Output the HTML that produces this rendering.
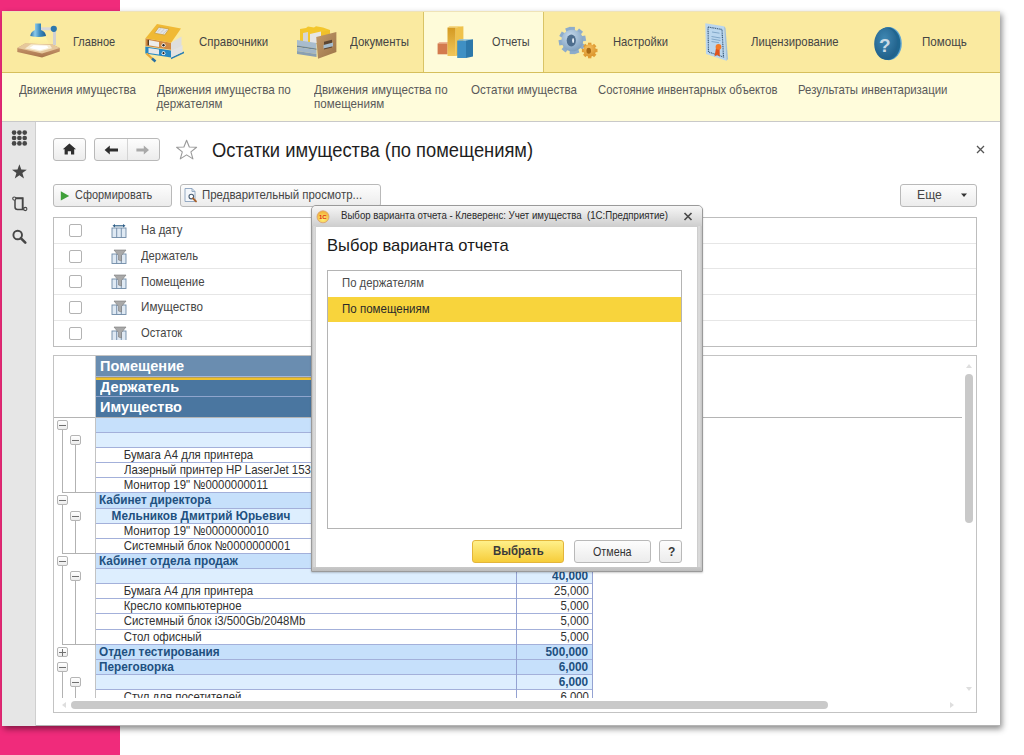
<!DOCTYPE html>
<html><head><meta charset="utf-8">
<style>
*{box-sizing:border-box;margin:0;padding:0}
html,body{width:1024px;height:755px;overflow:hidden;background:#fff;font-family:"Liberation Sans",sans-serif;position:relative}
.a{position:absolute}
.t{position:absolute;white-space:nowrap}
.btn{position:absolute;border:1px solid #b9b9b9;border-radius:3px;background:linear-gradient(#fdfdfd,#ececec)}
.cb{position:absolute;width:13px;height:13px;border:1px solid #b3b3b3;border-radius:2px;background:#fff;left:69px}
.tb{position:absolute;width:11px;height:10px;border:1px solid #b5b5b5;border-radius:2px;background:linear-gradient(#fff,#ececec)}
</style></head><body>
<div class="a" style="left:0px;top:0px;width:120px;height:755px;background:#f02b7b;"></div>
<div class="a" style="left:2px;top:11px;width:998px;height:715px;background:#fff;border-bottom:1px solid #b4b4b4;box-shadow:2px 3px 6px rgba(0,0,0,.45)"></div>
<div class="a" style="left:2px;top:11px;width:998px;height:62px;background:#faeaa0;border-top:1px solid #efe3b8;border-bottom:1px solid #d6bf5c"></div>
<div class="a" style="left:423px;top:12px;width:121px;height:60px;background:#fefbd9;border-left:1px solid #d9c466;border-right:1px solid #d9c466"></div>
<svg class="a" style="left:0;top:0" width="1024" height="72" viewBox="0 0 1024 72">
<defs>
<linearGradient id="gShade" x1="0" y1="0" x2="1" y2="0"><stop offset="0" stop-color="#2a6fa5"/><stop offset=".3" stop-color="#8ccbea"/><stop offset=".6" stop-color="#3d8cc0"/><stop offset="1" stop-color="#1f5f92"/></linearGradient>
<linearGradient id="gBoard" x1="0" y1="0" x2="0" y2="1"><stop offset="0" stop-color="#d2a278"/><stop offset="1" stop-color="#a8754c"/></linearGradient>
<radialGradient id="gPaper" cx="50%" cy="50%" r="50%"><stop offset="0" stop-color="#ffffff"/><stop offset=".6" stop-color="#fbf3dc"/><stop offset="1" stop-color="#e8caa0"/></radialGradient>
<linearGradient id="gCone" x1="0" y1="0" x2="0" y2="1"><stop offset="0" stop-color="#fff7a8"/><stop offset="1" stop-color="#fff3b0" stop-opacity=".2"/></linearGradient>
<linearGradient id="gYb" x1="0" y1="0" x2="0" y2="1"><stop offset="0" stop-color="#d49a22"/><stop offset="1" stop-color="#f0c65a"/></linearGradient>
<linearGradient id="gB" x1="0" y1="0" x2="1" y2="1"><stop offset="0" stop-color="#4f9ed0"/><stop offset="1" stop-color="#2a72a5"/></linearGradient>
<linearGradient id="gBrown" x1="0" y1="0" x2="1" y2="1"><stop offset="0" stop-color="#c29a6a"/><stop offset="1" stop-color="#9c7448"/></linearGradient>
<radialGradient id="gHelp" cx="45%" cy="35%" r="70%"><stop offset="0" stop-color="#3f88b3"/><stop offset="1" stop-color="#1d5c86"/></radialGradient>
<radialGradient id="gGear" cx="40%" cy="30%" r="75%"><stop offset="0" stop-color="#c6daec"/><stop offset="1" stop-color="#7b9cbc"/></radialGradient>
<radialGradient id="gGearO" cx="40%" cy="30%" r="75%"><stop offset="0" stop-color="#f6c160"/><stop offset="1" stop-color="#d9922a"/></radialGradient>
</defs>
<!-- lamp -->
<path d="M28.5 44 L31 36.5 L45.5 36.5 L49 44 Z" fill="url(#gCone)"/>
<path d="M17.3 48 L25 43.5 L52.5 44.5 L59.8 48 L59.8 51.5 L42 57.4 L17.3 52 Z" fill="url(#gBoard)"/>
<path d="M17.3 48 L25 43.5 L52.5 44.5 L59.8 48 L42 53.6 Z" fill="#e6c89c"/>
<path d="M25 48.5 L31 44.2 L50 45 L52 48.2 L40 51.5 Z" fill="#f7ecd2"/>
<path d="M29.5 48 L33.5 45.2 L47 45.8 L48.5 48 L40 50.3 Z" fill="#ffffff"/>
<rect x="53" y="29.5" width="3" height="15.5" fill="#d0d0d0"/>
<rect x="41" y="27.3" width="13" height="3" fill="#d8d8d8"/>
<circle cx="53.8" cy="28.8" r="3.1" fill="#2c78ad"/>
<path d="M35 23.5 L41 23.5 L41 30 Q45.6 31.5 46 36 Q38.2 38.2 30.3 36 Q30.8 31.5 35 30 Z" fill="url(#gShade)"/>
<!-- binders -->
<path d="M171 57.5 L184 51.5 L184 53.2 L171 59.2 Z" fill="#2a7fb6"/>
<path d="M171 50.5 L182.5 45 L182.5 52 L171 57.5 Z" fill="#e2e2e2"/>
<path d="M145.3 46.5 L171 50.5 L171 57.5 L145.3 53.5 Z" fill="#2688c2"/>
<path d="M148.5 48 L159 49.6 L159 54.6 L148.5 53 Z" fill="#e8e8e8"/>
<circle cx="163.5" cy="53.2" r="1.9" fill="#ffffff"/><circle cx="163.5" cy="53.2" r="1.1" fill="#222"/>
<path d="M171 42.8 L181.5 36.5 L181.5 46 L171 50.5 Z" fill="#dedede"/>
<path d="M145.5 38.2 L171 42.8 L171 49.8 L145.5 46.1 Z" fill="#d08a44"/>
<path d="M148.5 40 L159 41.9 L159 47 L148.5 45.3 Z" fill="#ececec"/>
<rect x="147.6" y="39.8" width="1.4" height="5.6" fill="#5a3a18"/>
<circle cx="163.5" cy="45.3" r="2" fill="#ffffff"/><circle cx="163.5" cy="45.3" r="1.2" fill="#222"/>
<path d="M145.5 38.2 L157 23.9 L181 28.6 L171.1 42.8 Z" fill="#f0b935"/>
<path d="M154.5 33.2 L158.8 27.2 L169 29 L164.7 35 Z" fill="#e4e4e4" stroke="#c89a30" stroke-width=".7"/>
<path d="M157.5 31.8 L161.5 28 M160.5 32.8 L164.5 29 M163 33.8 L167 30" stroke="#b8b8b8" stroke-width=".6"/>
<path d="M146.5 53.5 L152 58.5" stroke="#e8a93a" stroke-width="2.3"/>
<path d="M152 58.5 L155.5 61.5" stroke="#2a6fa0" stroke-width="2.5"/>
<!-- documents drawer -->
<path d="M300 44 L300 29 L306 28 L308 26.5 L314 27.5 L316 26.3 L323 27.5 L330 30 L330 44 Z" fill="#f3c62c"/>
<path d="M303 43 L303 33 L308 32 L308 43 Z" fill="#d6d6d6"/>
<path d="M310 43 L310 34 L321 31.5 L321 43 Z" fill="#e6e6e6"/>
<path d="M321 43 L321 32 L330 30 L330 43 Z" fill="#f0c02a"/>
<path d="M297 40 L316.5 43 L316.5 48.5 L297 45.5 Z" fill="#a8bccd"/>
<path d="M297 45.5 L316.5 48.5 L316.5 50 L297 47 Z" fill="#6e8496"/>
<path d="M297 47 L316.5 50 L316.5 54 L297 51 Z" fill="#a2b6c7"/>
<path d="M297 51 L316.5 54 L316.5 57 L297 54 Z" fill="#8aa0b2"/>
<path d="M316.2 36.9 L336.4 31.9 L336.4 52.1 L318 58.7 Z" fill="url(#gBrown)"/>
<path d="M324 41.8 L332 39.8 L332 47.5 L324 49.5 Z" fill="#5c4530"/>
<path d="M323.5 45 L333 42.6 L333 46.2 L323.5 48.6 Z" fill="#a6bccc"/>
<!-- reports bars -->
<path d="M437.6 43.5 L439.3 42.3 L449 42.3 L447.5 43.5 Z" fill="#e8a080"/>
<rect x="437.6" y="43.5" width="10" height="10.8" fill="#d37a4e"/>
<path d="M447.5 27.6 L449.5 26.3 L463.4 26.3 L455.5 27.6 Z" fill="#f4cf6a"/>
<rect x="447.5" y="27.6" width="8.2" height="28.4" fill="url(#gYb)"/>
<path d="M455.5 27.6 L463.4 26.3 L463.4 54.5 L455.5 56 Z" fill="#efc24c"/>
<path d="M457.2 40.6 L459.5 39.2 L473 39.2 L466 40.6 Z" fill="#8cc2e2"/>
<rect x="457.2" y="40.6" width="8.8" height="17.4" fill="#3f90c4"/>
<path d="M466 40.6 L473 39.2 L473 56.5 L466 58 Z" fill="#2d78aa"/>
<!-- settings gears -->
<g transform="translate(572.3 40.5)">
<g fill="#8daccb"><rect x="-2.6" y="-13.6" width="5.2" height="27.2"/><rect x="-2.6" y="-13.6" width="5.2" height="27.2" transform="rotate(40)"/><rect x="-2.6" y="-13.6" width="5.2" height="27.2" transform="rotate(80)"/><rect x="-2.6" y="-13.6" width="5.2" height="27.2" transform="rotate(120)"/><rect x="-2.6" y="-13.6" width="5.2" height="27.2" transform="rotate(160)"/></g>
<circle r="10.8" fill="url(#gGear)"/>
<ellipse cx="-1" cy="0" rx="4.6" ry="6" fill="#4e6e8e"/>
<ellipse cx="0.8" cy="0" rx="1" ry="2.5" fill="#e8f0f8"/>
</g>
<g transform="translate(589.7 50.5)">
<g fill="#e19d34"><rect x="-1.7" y="-7.8" width="3.4" height="15.6"/><rect x="-1.7" y="-7.8" width="3.4" height="15.6" transform="rotate(45)"/><rect x="-1.7" y="-7.8" width="3.4" height="15.6" transform="rotate(90)"/><rect x="-1.7" y="-7.8" width="3.4" height="15.6" transform="rotate(135)"/></g>
<circle r="6.2" fill="url(#gGearO)"/>
<ellipse cx="-1" cy=".3" rx="2.3" ry="3" fill="#a96a14"/>
</g>
<!-- license -->
<path d="M705.3 23.3 L724 26.3 L726.5 60.7 L706 54 Z" fill="#bad6ee"/>
<path d="M724 26.3 L726.5 60.7 L728 59 L725.5 28 Z" fill="#9fc0dc"/>
<path d="M708 27 L722 29.5 L723.5 57 L708.5 52 Z" fill="none" stroke="#3f5e7c" stroke-width="1.2" stroke-dasharray="1.1 .7"/>
<path d="M712 32 L719.5 33.2 M711.5 36.5 L720.5 38 M711.5 39 L720.5 40.5 M711.5 41.5 L719 42.7" stroke="#7aa2c4" stroke-width=".9"/>
<path d="M716 48 L714.5 56.5 L717.2 54.8 L719.8 56.5 L719.6 48 Z" fill="#e0531c"/>
<circle cx="718.5" cy="46.8" r="2.9" fill="#f27a28"/>
<!-- help -->
<ellipse cx="888.8" cy="43.6" rx="13" ry="16.6" fill="#5fa6d2"/>
<ellipse cx="887.8" cy="43.6" rx="12.6" ry="16.4" fill="#1f6690"/>
<ellipse cx="885.8" cy="43.8" rx="11.6" ry="15.8" fill="url(#gHelp)"/>
<text x="884.8" y="52" font-family="Liberation Sans" font-weight="bold" font-size="19" fill="#c9dbe6" text-anchor="middle">?</text>
</svg>

<div class="t" style="left:72.50px;top:36.52px;font-size:11.2px;line-height:11.2px;color:#444444;transform:scale(0.9877,1.12);transform-origin:0 9.481px;">Главное</div>
<div class="t" style="left:198.50px;top:36.52px;font-size:11.2px;line-height:11.2px;color:#444444;transform:scale(1.0218,1.12);transform-origin:0 9.481px;">Справочники</div>
<div class="t" style="left:350.00px;top:36.52px;font-size:11.2px;line-height:11.2px;color:#444444;transform:scale(1.0238,1.12);transform-origin:0 9.481px;">Документы</div>
<div class="t" style="left:492.40px;top:36.52px;font-size:11.2px;line-height:11.2px;color:#444444;transform:scale(0.9734,1.12);transform-origin:0 9.481px;">Отчеты</div>
<div class="t" style="left:613.00px;top:36.52px;font-size:11.2px;line-height:11.2px;color:#444444;transform:scale(1.0017,1.12);transform-origin:0 9.481px;">Настройки</div>
<div class="t" style="left:751.00px;top:36.52px;font-size:11.2px;line-height:11.2px;color:#444444;transform:scale(1.0097,1.12);transform-origin:0 9.481px;">Лицензирование</div>
<div class="t" style="left:921.60px;top:36.52px;font-size:11.2px;line-height:11.2px;color:#444444;transform:scale(1.0373,1.12);transform-origin:0 9.481px;">Помощь</div>
<div class="a" style="left:2px;top:73px;width:998px;height:49px;background:#fffcdb;border-bottom:1px solid #c9c9c9"></div>
<div class="t" style="left:18.50px;top:84.18px;font-size:11.6px;line-height:11.6px;color:#595959;transform:scale(1.0006,1.12);transform-origin:0 9.819px;">Движения имущества</div>
<div class="t" style="left:156.60px;top:84.18px;font-size:11.6px;line-height:11.6px;color:#595959;transform:scale(1.0077,1.12);transform-origin:0 9.819px;">Движения имущества по</div>
<div class="t" style="left:156.60px;top:98.38px;font-size:11.6px;line-height:11.6px;color:#595959;transform:scale(1.0000,1.12);transform-origin:0 9.819px;">держателям</div>
<div class="t" style="left:314.00px;top:84.18px;font-size:11.6px;line-height:11.6px;color:#595959;transform:scale(1.0062,1.12);transform-origin:0 9.819px;">Движения имущества по</div>
<div class="t" style="left:314.00px;top:98.38px;font-size:11.6px;line-height:11.6px;color:#595959;transform:scale(1.0000,1.12);transform-origin:0 9.819px;">помещениям</div>
<div class="t" style="left:471.00px;top:84.18px;font-size:11.6px;line-height:11.6px;color:#595959;transform:scale(0.9987,1.12);transform-origin:0 9.819px;">Остатки имущества</div>
<div class="t" style="left:598.20px;top:84.18px;font-size:11.6px;line-height:11.6px;color:#595959;transform:scale(0.9751,1.12);transform-origin:0 9.819px;">Состояние инвентарных объектов</div>
<div class="t" style="left:798.00px;top:84.18px;font-size:11.6px;line-height:11.6px;color:#595959;transform:scale(0.9837,1.12);transform-origin:0 9.819px;">Результаты инвентаризации</div>
<div class="a" style="left:2px;top:122px;width:34px;height:604px;background:#e6e6e6;border-right:1px solid #cfcfcf"></div>
<div class="btn" style="left:53px;top:138px;width:33px;height:23px"></div>
<div class="btn" style="left:94px;top:138px;width:66px;height:23px"></div>
<div class="a" style="left:127px;top:139px;width:1px;height:21px;background:#d4d4d4;"></div>
<!-- header icons -->
<svg class="a" style="z-index:3;left:0;top:120px" width="210" height="100" viewBox="0 120 210 100">
<!-- sidebar: grid -->
<g fill="#474747"><circle cx="14.1" cy="132.6" r="2.35"/><circle cx="19.4" cy="132.6" r="2.35"/><circle cx="24.7" cy="132.6" r="2.35"/><circle cx="14.1" cy="138" r="2.35"/><circle cx="19.4" cy="138" r="2.35"/><circle cx="24.7" cy="138" r="2.35"/><circle cx="14.1" cy="143.4" r="2.35"/><circle cx="19.4" cy="143.4" r="2.35"/><circle cx="24.7" cy="143.4" r="2.35"/></g>
<!-- star filled -->
<path d="M19.4 164.3 L21.3 169.6 L26.8 169.7 L22.4 173 L24 178.5 L19.4 175.3 L14.8 178.5 L16.4 173 L12 169.7 L17.5 169.6 Z" fill="#474747"/>
<!-- history scroll -->
<path d="M15 198.5 L22.5 198.5 L22.5 208.5 L25.5 208.5 M15 198.5 L15 207 Q15 209.5 17.5 209.5 L25 209.5" fill="none" stroke="#474747" stroke-width="1.5"/>
<circle cx="14.3" cy="198.6" r="1.6" fill="#e6e6e6" stroke="#474747" stroke-width="1.1"/>
<circle cx="25.3" cy="209" r="1.6" fill="#e6e6e6" stroke="#474747" stroke-width="1.1"/>
<path d="M15.8 198 L22.8 198 L22.8 208" fill="none" stroke="#474747" stroke-width="1.5"/>
</svg>
<svg class="a" style="z-index:3;left:0;top:225px" width="36" height="24" viewBox="0 225 36 24">
<circle cx="17.7" cy="235" r="4.3" fill="none" stroke="#474747" stroke-width="1.9"/>
<path d="M20.8 238.2 L25.3 242.7" stroke="#474747" stroke-width="2.6" stroke-linecap="round"/>
</svg>
<svg class="a" style="z-index:3;left:50px;top:135px" width="160" height="30" viewBox="50 135 160 30">
<path d="M69.4 143.6 L76 149.3 L74.2 149.3 L74.2 154.5 L71 154.5 L71 151.3 L67.8 151.3 L67.8 154.5 L64.6 154.5 L64.6 149.3 L62.8 149.3 Z" fill="#2e2e2e"/>
<path d="M104.6 150 L109.8 145.6 L109.8 148.6 L118 148.6 L118 151.4 L109.8 151.4 L109.8 154.4 Z" fill="#2e2e2e"/>
<path d="M149 150 L143.8 145.6 L143.8 148.6 L136.4 148.6 L136.4 151.4 L143.8 151.4 L143.8 154.4 Z" fill="#a9a9a9"/>
<path d="M186.6 140.3 L189.3 147 L196.6 147.3 L190.9 151.9 L192.9 158.9 L186.6 154.9 L180.3 158.9 L182.3 151.9 L176.6 147.3 L183.9 147 Z" fill="none" stroke="#9a9a9a" stroke-width="1.1" stroke-linejoin="round"/>
</svg>
<svg class="a" style="z-index:3;left:58px;top:188px" width="14" height="16" viewBox="58 188 14 16"><path d="M60.8 191.3 L69.2 196 L60.8 200.6 Z" fill="#3fa03a"/></svg>
<svg class="a" style="z-index:3;left:183px;top:187px" width="16" height="16" viewBox="183 187 16 16">
<path d="M185 188.5 L192 188.5 L195 191.5 L195 201.5 L185 201.5 Z" fill="#f4f7fb" stroke="#8aa2bd" stroke-width=".9"/>
<path d="M192 188.5 L192 191.5 L195 191.5" fill="none" stroke="#8aa2bd" stroke-width=".9"/>
<circle cx="191.3" cy="196.6" r="2.3" fill="#fff" stroke="#4a5e74" stroke-width="1.1"/>
<path d="M193 198.4 L196 201.4" stroke="#a8602a" stroke-width="1.9" stroke-linecap="round"/>
</svg>
<svg class="a" style="z-index:3;left:958px;top:191px" width="10" height="8" viewBox="958 191 10 8"><path d="M961 193.5 L967 193.5 L964 197 Z" fill="#333"/></svg>

<div class="t" style="left:211.60px;top:141.79px;font-size:18.2px;line-height:18.2px;color:#1e1e1e;transform:scale(1.0077,1.06);transform-origin:0 15.406px;">Остатки имущества (по помещениям)</div>
<svg class="a" style="left:975px;top:144px" width="11" height="11" viewBox="0 0 11 11"><path d="M2 2 L9 9 M9 2 L2 9" stroke="#555" stroke-width="1.3"/></svg>
<div class="btn" style="left:53px;top:184px;width:119px;height:23px"></div>
<div class="t" style="left:75.10px;top:189.79px;font-size:11px;line-height:11px;color:#454545;transform:scale(0.9961,1.12);transform-origin:0 9.312px;">Сформировать</div>
<div class="btn" style="left:180px;top:184px;width:201px;height:23px"></div>
<div class="t" style="left:202.00px;top:189.79px;font-size:11px;line-height:11px;color:#454545;transform:scale(1.0402,1.12);transform-origin:0 9.312px;">Предварительный просмотр...</div>
<div class="btn" style="left:900px;top:184px;width:77px;height:23px"></div>
<div class="t" style="left:917.00px;top:190.47px;font-size:11.5px;line-height:11.5px;color:#454545;transform:scale(1.0607,1.08);transform-origin:0 9.735px;">Еще</div>
<div class="a" style="left:53px;top:217px;width:924px;height:130px;background:#fff;border:1px solid #bdbdbd"></div>
<div class="a" style="left:54px;top:243px;width:922px;height:1px;background:#e6e6e6;"></div>
<div class="a" style="left:54px;top:268px;width:922px;height:1px;background:#e6e6e6;"></div>
<div class="a" style="left:54px;top:294px;width:922px;height:1px;background:#e6e6e6;"></div>
<div class="a" style="left:54px;top:320px;width:922px;height:1px;background:#e6e6e6;"></div>
<div class="cb" style="top:224px"></div>
<div class="cb" style="top:250px"></div>
<div class="cb" style="top:275px"></div>
<div class="cb" style="top:301px"></div>
<div class="cb" style="top:327px"></div>
<svg class="a" style="z-index:3;left:108px;top:220px" width="22" height="120" viewBox="108 220 22 120"><rect x="112" y="228" width="14" height="9.5" fill="#dfe9f3" stroke="#6f8aa6" stroke-width=".9"/><path d="M116.7 228 L116.7 237.5 M121.3 228 L121.3 237.5" stroke="#6f8aa6" stroke-width=".9"/><path d="M112.5 225.8 L115 224 L115 227.6 Z M125.5 225.8 L123 224 L123 227.6 Z" fill="#2f5f88"/><path d="M114.5 225.8 L123.5 225.8" stroke="#2f5f88" stroke-width="1.2"/><rect x="112" y="254" width="14" height="9.5" fill="#dfe9f3" stroke="#6f8aa6" stroke-width=".9"/><path d="M116.7 254 L116.7 263.5 M121.3 254 L121.3 263.5" stroke="#6f8aa6" stroke-width=".9"/><path d="M114 250 L126 250 L121.5 255.5 L121.5 261 L118.5 260 L118.5 255.5 Z" fill="#a9a9a9" stroke="#7a7a7a" stroke-width=".6"/><rect x="112" y="279" width="14" height="9.5" fill="#dfe9f3" stroke="#6f8aa6" stroke-width=".9"/><path d="M116.7 279 L116.7 288.5 M121.3 279 L121.3 288.5" stroke="#6f8aa6" stroke-width=".9"/><path d="M114 275 L126 275 L121.5 280.5 L121.5 286 L118.5 285 L118.5 280.5 Z" fill="#a9a9a9" stroke="#7a7a7a" stroke-width=".6"/><rect x="112" y="305" width="14" height="9.5" fill="#dfe9f3" stroke="#6f8aa6" stroke-width=".9"/><path d="M116.7 305 L116.7 314.5 M121.3 305 L121.3 314.5" stroke="#6f8aa6" stroke-width=".9"/><path d="M114 301 L126 301 L121.5 306.5 L121.5 312 L118.5 311 L118.5 306.5 Z" fill="#a9a9a9" stroke="#7a7a7a" stroke-width=".6"/><rect x="112" y="331" width="14" height="9.5" fill="#dfe9f3" stroke="#6f8aa6" stroke-width=".9"/><path d="M116.7 331 L116.7 340.5 M121.3 331 L121.3 340.5" stroke="#6f8aa6" stroke-width=".9"/><path d="M114 327 L126 327 L121.5 332.5 L121.5 338 L118.5 337 L118.5 332.5 Z" fill="#a9a9a9" stroke="#7a7a7a" stroke-width=".6"/></svg>
<div class="t" style="left:140.80px;top:225.33px;font-size:11.3px;line-height:11.3px;color:#454545;transform:scale(1.0047,1.12);transform-origin:0 9.565px;">На дату</div>
<div class="t" style="left:140.80px;top:251.03px;font-size:11.3px;line-height:11.3px;color:#454545;transform:scale(0.9956,1.12);transform-origin:0 9.565px;">Держатель</div>
<div class="t" style="left:140.80px;top:277.03px;font-size:11.3px;line-height:11.3px;color:#454545;transform:scale(1.0120,1.12);transform-origin:0 9.565px;">Помещение</div>
<div class="t" style="left:140.80px;top:302.43px;font-size:11.3px;line-height:11.3px;color:#454545;transform:scale(1.0316,1.12);transform-origin:0 9.565px;">Имущество</div>
<div class="t" style="left:140.80px;top:328.33px;font-size:11.3px;line-height:11.3px;color:#454545;transform:scale(0.9869,1.12);transform-origin:0 9.565px;">Остаток</div>
<div class="a" style="left:53px;top:355px;width:924px;height:358px;background:#fff;border:1px solid #c3c3c3"></div>
<div class="a" style="left:54px;top:356px;width:908px;height:342px;overflow:hidden">
<div class="a" style="left:42px;top:0px;width:496px;height:20px;background:#6a8db0;"></div>
<div class="a" style="left:42px;top:20px;width:496px;height:1px;background:#a9b6d9;"></div>
<div class="a" style="left:42px;top:21px;width:496px;height:1px;background:#b9a050;"></div>
<div class="a" style="left:42px;top:22px;width:496px;height:2px;background:#efc12e;"></div>
<div class="a" style="left:42px;top:24px;width:496px;height:16px;background:#4a76a0;"></div>
<div class="a" style="left:42px;top:40px;width:496px;height:1px;background:#8fa5cd;"></div>
<div class="a" style="left:42px;top:41px;width:496px;height:20px;background:#4a76a0;"></div>
<div class="a" style="left:0px;top:61px;width:908px;height:1px;background:#b4b4b4;"></div>
<div class="a" style="left:41px;top:0px;width:1px;height:61px;background:#c8c8c8;"></div>
<div class="t" style="left:46.10px;top:3.23px;font-size:14.5px;line-height:14.5px;color:#fff;font-weight:bold;transform:scale(1.0030,1.04);transform-origin:0 12.274px;">Помещение</div>
<div class="t" style="left:46.10px;top:23.83px;font-size:14.5px;line-height:14.5px;color:#fff;font-weight:bold;transform:scale(1.0000,1.04);transform-origin:0 12.274px;">Держатель</div>
<div class="t" style="left:46.10px;top:44.23px;font-size:14.5px;line-height:14.5px;color:#fff;font-weight:bold;transform:scale(1.0000,1.04);transform-origin:0 12.274px;">Имущество</div>
<div class="a" style="left:42px;top:62px;width:496px;height:14px;background:#c6e0fb;"></div>
<div class="a" style="left:42px;top:76px;width:496px;height:1px;background:#a3b0da;"></div>
<div class="a" style="left:42px;top:77px;width:496px;height:14px;background:#ddeefe;"></div>
<div class="a" style="left:42px;top:91px;width:496px;height:1px;background:#a3b0da;"></div>
<div class="a" style="left:42px;top:92px;width:496px;height:14px;background:#fff;"></div>
<div class="a" style="left:42px;top:106px;width:496px;height:1px;background:#a3b0da;"></div>
<div class="t" style="left:69.70px;top:94.33px;font-size:11.42px;line-height:11.42px;color:#303030;transform:scale(1.0000,1.15);transform-origin:0 9.667px;">Бумага А4 для принтера</div>
<div class="a" style="left:42px;top:107px;width:496px;height:14px;background:#fff;"></div>
<div class="a" style="left:42px;top:121px;width:496px;height:1px;background:#a3b0da;"></div>
<div class="t" style="left:69.70px;top:109.33px;font-size:11.42px;line-height:11.42px;color:#303030;transform:scale(1.0027,1.15);transform-origin:0 9.667px;">Лазерный принтер HP LaserJet 153</div>
<div class="a" style="left:42px;top:122px;width:496px;height:14px;background:#fff;"></div>
<div class="a" style="left:42px;top:136px;width:496px;height:1px;background:#a3b0da;"></div>
<div class="t" style="left:69.70px;top:124.33px;font-size:11.42px;line-height:11.42px;color:#303030;transform:scale(1.0000,1.15);transform-origin:0 9.667px;">Монитор 19" №0000000011</div>
<div class="a" style="left:42px;top:137px;width:496px;height:15px;background:#c6e0fb;"></div>
<div class="a" style="left:42px;top:152px;width:496px;height:1px;background:#a3b0da;"></div>
<div class="t" style="left:45.00px;top:138.91px;font-size:11.8px;line-height:11.8px;color:#21507f;font-weight:bold;transform:scale(1.0000,1.02);transform-origin:0 9.989px;">Кабинет директора</div>
<div class="a" style="left:42px;top:153px;width:496px;height:14px;background:#ddeefe;"></div>
<div class="a" style="left:42px;top:167px;width:496px;height:1px;background:#a3b0da;"></div>
<div class="t" style="left:57.60px;top:154.91px;font-size:11.8px;line-height:11.8px;color:#21507f;font-weight:bold;transform:scale(1.0000,1.02);transform-origin:0 9.989px;">Мельников Дмитрий Юрьевич</div>
<div class="a" style="left:42px;top:168px;width:496px;height:14px;background:#fff;"></div>
<div class="a" style="left:42px;top:182px;width:496px;height:1px;background:#a3b0da;"></div>
<div class="t" style="left:69.70px;top:170.33px;font-size:11.42px;line-height:11.42px;color:#303030;transform:scale(1.0000,1.15);transform-origin:0 9.667px;">Монитор 19" №0000000010</div>
<div class="a" style="left:42px;top:183px;width:496px;height:14px;background:#fff;"></div>
<div class="a" style="left:42px;top:197px;width:496px;height:1px;background:#a3b0da;"></div>
<div class="t" style="left:69.70px;top:185.33px;font-size:11.42px;line-height:11.42px;color:#303030;transform:scale(1.0000,1.15);transform-origin:0 9.667px;">Системный блок №0000000001</div>
<div class="a" style="left:42px;top:198px;width:496px;height:14px;background:#c6e0fb;"></div>
<div class="a" style="left:42px;top:212px;width:496px;height:1px;background:#a3b0da;"></div>
<div class="t" style="left:45.00px;top:199.91px;font-size:11.8px;line-height:11.8px;color:#21507f;font-weight:bold;transform:scale(1.0000,1.02);transform-origin:0 9.989px;">Кабинет отдела продаж</div>
<div class="a" style="left:42px;top:213px;width:496px;height:14px;background:#ddeefe;"></div>
<div class="a" style="left:42px;top:227px;width:496px;height:1px;background:#a3b0da;"></div>
<div class="t" style="left:498.08px;top:214.91px;font-size:11.8px;line-height:11.8px;color:#21507f;font-weight:bold;transform:scale(1.0000,1.02);transform-origin:0 9.989px;">40,000</div>
<div class="a" style="left:42px;top:228px;width:496px;height:14px;background:#fff;"></div>
<div class="a" style="left:42px;top:242px;width:496px;height:1px;background:#a3b0da;"></div>
<div class="t" style="left:69.70px;top:230.33px;font-size:11.42px;line-height:11.42px;color:#303030;transform:scale(1.0000,1.15);transform-origin:0 9.667px;">Бумага А4 для принтера</div>
<div class="t" style="left:500.06px;top:230.33px;font-size:11.42px;line-height:11.42px;color:#303030;transform:scale(1.0000,1.15);transform-origin:0 9.667px;">25,000</div>
<div class="a" style="left:42px;top:243px;width:496px;height:14px;background:#fff;"></div>
<div class="a" style="left:42px;top:257px;width:496px;height:1px;background:#a3b0da;"></div>
<div class="t" style="left:69.70px;top:245.33px;font-size:11.42px;line-height:11.42px;color:#303030;transform:scale(1.0000,1.15);transform-origin:0 9.667px;">Кресло компьютерное</div>
<div class="t" style="left:506.40px;top:245.33px;font-size:11.42px;line-height:11.42px;color:#303030;transform:scale(1.0000,1.15);transform-origin:0 9.667px;">5,000</div>
<div class="a" style="left:42px;top:258px;width:496px;height:15px;background:#fff;"></div>
<div class="a" style="left:42px;top:273px;width:496px;height:1px;background:#a3b0da;"></div>
<div class="t" style="left:69.70px;top:260.33px;font-size:11.42px;line-height:11.42px;color:#303030;transform:scale(1.0000,1.15);transform-origin:0 9.667px;">Системный блок i3/500Gb/2048Mb</div>
<div class="t" style="left:506.40px;top:260.33px;font-size:11.42px;line-height:11.42px;color:#303030;transform:scale(1.0000,1.15);transform-origin:0 9.667px;">5,000</div>
<div class="a" style="left:42px;top:274px;width:496px;height:14px;background:#fff;"></div>
<div class="a" style="left:42px;top:288px;width:496px;height:1px;background:#a3b0da;"></div>
<div class="t" style="left:69.70px;top:276.33px;font-size:11.42px;line-height:11.42px;color:#303030;transform:scale(1.0000,1.15);transform-origin:0 9.667px;">Стол офисный</div>
<div class="t" style="left:506.40px;top:276.33px;font-size:11.42px;line-height:11.42px;color:#303030;transform:scale(1.0000,1.15);transform-origin:0 9.667px;">5,000</div>
<div class="a" style="left:42px;top:289px;width:496px;height:14px;background:#c6e0fb;"></div>
<div class="a" style="left:42px;top:303px;width:496px;height:1px;background:#a3b0da;"></div>
<div class="t" style="left:45.00px;top:290.91px;font-size:11.8px;line-height:11.8px;color:#21507f;font-weight:bold;transform:scale(1.0000,1.02);transform-origin:0 9.989px;">Отдел тестирования</div>
<div class="t" style="left:491.52px;top:290.91px;font-size:11.8px;line-height:11.8px;color:#21507f;font-weight:bold;transform:scale(1.0000,1.02);transform-origin:0 9.989px;">500,000</div>
<div class="a" style="left:42px;top:304px;width:496px;height:14px;background:#c6e0fb;"></div>
<div class="a" style="left:42px;top:318px;width:496px;height:1px;background:#a3b0da;"></div>
<div class="t" style="left:45.00px;top:305.91px;font-size:11.8px;line-height:11.8px;color:#21507f;font-weight:bold;transform:scale(1.0000,1.02);transform-origin:0 9.989px;">Переговорка</div>
<div class="t" style="left:504.64px;top:305.91px;font-size:11.8px;line-height:11.8px;color:#21507f;font-weight:bold;transform:scale(1.0000,1.02);transform-origin:0 9.989px;">6,000</div>
<div class="a" style="left:42px;top:319px;width:496px;height:14px;background:#ddeefe;"></div>
<div class="a" style="left:42px;top:333px;width:496px;height:1px;background:#a3b0da;"></div>
<div class="t" style="left:504.64px;top:320.91px;font-size:11.8px;line-height:11.8px;color:#21507f;font-weight:bold;transform:scale(1.0000,1.02);transform-origin:0 9.989px;">6,000</div>
<div class="a" style="left:42px;top:334px;width:496px;height:14px;background:#fff;"></div>
<div class="a" style="left:42px;top:348px;width:496px;height:1px;background:#a3b0da;"></div>
<div class="t" style="left:69.70px;top:336.33px;font-size:11.42px;line-height:11.42px;color:#303030;transform:scale(1.0000,1.15);transform-origin:0 9.667px;">Стул для посетителей</div>
<div class="t" style="left:506.40px;top:336.33px;font-size:11.42px;line-height:11.42px;color:#303030;transform:scale(1.0000,1.15);transform-origin:0 9.667px;">6,000</div>
<div class="a" style="left:41px;top:61px;width:1px;height:300px;background:#c3c3c3;"></div>
<div class="a" style="left:462px;top:62px;width:1px;height:300px;background:#94a2d2;"></div>
<div class="a" style="left:538px;top:62px;width:1px;height:300px;background:#94a2d2;"></div>
<div class="tb" style="left:3px;top:64px"></div><div class="a" style="left:5px;top:68.5px;width:7px;height:1.2px;background:#707070;"></div><div class="a" style="left:8px;top:74px;width:1px;height:62px;background:#b2b2b2;"></div><div class="tb" style="left:16px;top:79px"></div><div class="a" style="left:18px;top:83.5px;width:7px;height:1.2px;background:#707070;"></div><div class="a" style="left:21px;top:89px;width:1px;height:47px;background:#b2b2b2;"></div><div class="a" style="left:8px;top:136px;width:34px;height:1px;background:#b2b2b2;"></div>
<div class="tb" style="left:3px;top:139px"></div><div class="a" style="left:5px;top:143.5px;width:7px;height:1.2px;background:#707070;"></div><div class="a" style="left:8px;top:149px;width:1px;height:48px;background:#b2b2b2;"></div><div class="tb" style="left:16px;top:155px"></div><div class="a" style="left:18px;top:159.5px;width:7px;height:1.2px;background:#707070;"></div><div class="a" style="left:21px;top:165px;width:1px;height:32px;background:#b2b2b2;"></div><div class="a" style="left:8px;top:197px;width:34px;height:1px;background:#b2b2b2;"></div>
<div class="tb" style="left:3px;top:200px"></div><div class="a" style="left:5px;top:204.5px;width:7px;height:1.2px;background:#707070;"></div><div class="a" style="left:8px;top:210px;width:1px;height:78px;background:#b2b2b2;"></div><div class="tb" style="left:16px;top:215px"></div><div class="a" style="left:18px;top:219.5px;width:7px;height:1.2px;background:#707070;"></div><div class="a" style="left:21px;top:225px;width:1px;height:63px;background:#b2b2b2;"></div><div class="a" style="left:8px;top:288px;width:34px;height:1px;background:#b2b2b2;"></div>
<div class="tb" style="left:3px;top:291px"></div><div class="a" style="left:5px;top:295.5px;width:7px;height:1.2px;background:#707070;"></div><div class="a" style="left:7.899999999999999px;top:292.5px;width:1.2px;height:7px;background:#707070;"></div>
<div class="tb" style="left:3px;top:306px"></div><div class="a" style="left:5px;top:310.5px;width:7px;height:1.2px;background:#707070;"></div><div class="a" style="left:8px;top:316px;width:1px;height:48px;background:#b2b2b2;"></div><div class="tb" style="left:16px;top:321px"></div><div class="a" style="left:18px;top:325.5px;width:7px;height:1.2px;background:#707070;"></div><div class="a" style="left:21px;top:331px;width:1px;height:33px;background:#b2b2b2;"></div>
</div>
<div class="a" style="left:71px;top:701px;width:757px;height:8px;border-radius:4px;background:#c9c9c9"></div>
<div class="a" style="left:965px;top:374px;width:8px;height:149px;border-radius:4px;background:#c9c9c9"></div>
<svg class="a" style="left:60px;top:701px" width="8" height="8"><path d="M6 1 L2 4 L6 7Z" fill="#dedede"/></svg>
<svg class="a" style="left:948px;top:701px" width="8" height="8"><path d="M2 1 L6 4 L2 7Z" fill="#dedede"/></svg>
<svg class="a" style="left:965px;top:362px" width="8" height="8"><path d="M1 6 L4 2 L7 6Z" fill="#dedede"/></svg>
<svg class="a" style="left:965px;top:685px" width="8" height="8"><path d="M1 2 L4 6 L7 2Z" fill="#dedede"/></svg>
<div class="a" style="left:311px;top:205px;width:392px;height:367px;border:1px solid #9a9a9a;border-radius:5px 5px 1px 1px;background:#cfcfcf;box-shadow:0 1px 2px rgba(0,0,0,.2)"></div>
<div class="a" style="left:312px;top:206px;width:390px;height:21px;background:linear-gradient(#f6f6f6,#e6e6e6 40%,#cdcdcd);border-radius:4px 4px 0 0"></div>
<div class="a" style="left:312px;top:226px;width:4px;height:341px;background:linear-gradient(90deg,#c2c2c2,#dcdcdc 2px,#cfcfcf);"></div>
<div class="a" style="left:697px;top:226px;width:5px;height:341px;background:linear-gradient(90deg,#c8c8c8,#dedede 2px,#c4c4c4);"></div>
<div class="a" style="left:312px;top:567px;width:390px;height:4px;background:linear-gradient(#c9c9c9,#bdbdbd);"></div>
<div class="a" style="left:316px;top:227px;width:381px;height:340px;background:#fff;"></div>
<svg class="a" style="left:316px;top:210px" width="14" height="14" viewBox="0 0 14 14"><defs><radialGradient id="lg" cx="50%" cy="70%" r="60%"><stop offset="0" stop-color="#fff27a"/><stop offset="1" stop-color="#f3b53c"/></radialGradient></defs><circle cx="7" cy="6.8" r="6" fill="url(#lg)" stroke="#d9a070" stroke-width=".8"/><text x="6.8" y="8.6" font-family="Liberation Sans" font-weight="bold" font-size="6" fill="#e02a10" text-anchor="middle">1С</text></svg>
<div class="t" style="left:341.00px;top:211.27px;font-size:10.2px;line-height:10.2px;color:#2a2a2a;transform:scale(0.9468,1.08);transform-origin:0 8.634px;">Выбор варианта отчета - Клеверенс: Учет имущества  (1С:Предприятие)</div>
<svg class="a" style="left:683px;top:212px" width="10" height="9" viewBox="0 0 10 9"><path d="M1.5 1 L8.5 8 M8.5 1 L1.5 8" stroke="#4a4a4a" stroke-width="1.7"/></svg>
<div class="t" style="left:326.80px;top:238.25px;font-size:16.6px;line-height:16.6px;color:#1a1a1a;transform:scale(0.9980,1.0);transform-origin:0 14.052px;">Выбор варианта отчета</div>
<div class="a" style="left:327px;top:270px;width:355px;height:259px;background:#fff;border:1px solid #b4b4b4"></div>
<div class="t" style="left:341.80px;top:278.35px;font-size:11.4px;line-height:11.4px;color:#4a4a4a;transform:scale(0.9943,1.12);transform-origin:0 9.650px;">По держателям</div>
<div class="a" style="left:328px;top:297px;width:353px;height:25px;background:#f8d43c;"></div>
<div class="t" style="left:341.80px;top:303.85px;font-size:11.4px;line-height:11.4px;color:#2a2a2a;transform:scale(1.0120,1.12);transform-origin:0 9.650px;">По помещениям</div>
<div class="a" style="left:472px;top:540px;width:92px;height:23px;background:linear-gradient(#fff08a,#f6cd3a);border:1px solid #e3b53a;border-radius:3px"></div>
<div class="t" style="left:493.40px;top:546.43px;font-size:11.3px;line-height:11.3px;color:#3a3a3a;font-weight:bold;transform:scale(1.0059,1.1);transform-origin:0 9.565px;">Выбрать</div>
<div class="btn" style="left:574px;top:540px;width:77px;height:23px"></div>
<div class="t" style="left:592.60px;top:546.69px;font-size:11px;line-height:11px;color:#333;transform:scale(0.9765,1.12);transform-origin:0 9.312px;">Отмена</div>
<div class="btn" style="left:659px;top:540px;width:23px;height:23px"></div>
<div class="t" style="left:667.70px;top:544.57px;font-size:13.5px;line-height:13.5px;color:#3a3a3a;font-weight:bold;transform:scale(0.8875,1.0);transform-origin:0 11.428px;">?</div>
</body></html>
